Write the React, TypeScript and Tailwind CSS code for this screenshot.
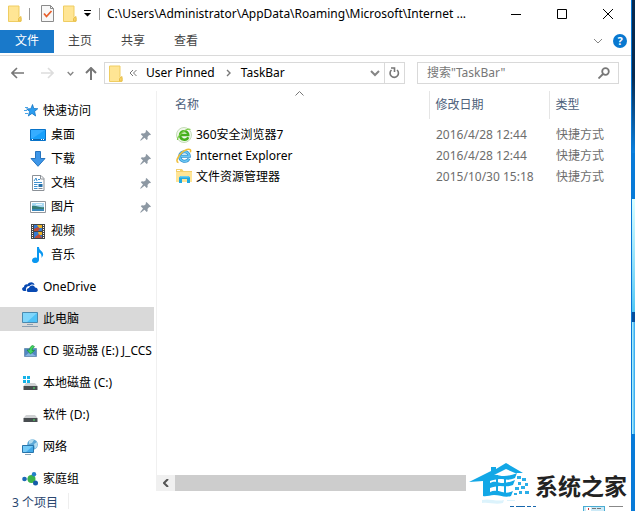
import { useState } from 'react';
import type { ReactNode } from 'react';

type NavItem = { name: string; icon: ReactNode; child?: boolean; pinned?: boolean };
type FileItem = { name: string; date: string; type: string; icon: ReactNode };

const FolderIcon = () => (
  <svg width="14" height="17" viewBox="0 0 14 17" className="shrink-0">
    <path d="M.5 1h10.500v11.500l2 .5v3.500H.5z" fill="#ffe594" stroke="#efcd62" />
    <path d="M10.500 13.500l2.500-2v4.500h-2.500z" fill="#f9d569" stroke="#e8bf4c" />
  </svg>
);

const PropertiesIcon = () => (
  <svg width="13" height="17" viewBox="0 0 13 17">
    <path d="M.5.5h9l3 3v13H.5z" fill="#f8f8f8" stroke="#8b8b8b" />
    <path d="M9.500.5v3h3" fill="none" stroke="#8b8b8b" />
    <path d="M3 8.500l2.500 3L10.500 6" fill="none" stroke="#e8602c" strokeWidth="1.800" />
  </svg>
);

const PinIcon = () => (
  <svg width="11" height="11" viewBox="0 0 11 11" fill="#8d98a3">
    <path d="M6.500 0L11 4.500l-1 .8-.8-.2L7.500 7l.2 2-1 1-2.200-2.200L.7 10.700l-.5-.4L3 6.400.8 4.300l1-1 2.200.2L6 2 5.600.9z" />
  </svg>
);

const StarIcon = () => (
  <svg width="14" height="14" viewBox="0 0 14 14">
    <path d="M8.500.5l1.300 4 4 .2-3.200 2.700 1 4.600-3.600-2.600L4.300 12l1.300-4.400-3-2.700 4.300-.2z" fill="#2b9df0" stroke="#1776c4" strokeWidth=".8" />
    <path d="M1 3.500h3M0 6.500h3M1 9.500h3" stroke="#4aa5e8" strokeWidth="1" />
  </svg>
);

const DesktopIcon = () => (
  <svg width="16" height="12" viewBox="0 0 16 12">
    <path d="M.5.500h15v11H.5z" fill="#18a0fb" stroke="#0873c9" />
    <path d="M1 1h14L3 9H1z" fill="#36adff" />
    <path d="M1 10h14v1H1z" fill="#0c65ad" />
    <path d="M2 10h1v1H2zM11 10h1v1h-1zM13 10h1v1h-1z" fill="#fff" />
  </svg>
);

const DownloadIcon = () => (
  <svg width="16" height="16" viewBox="0 0 16 16">
    <path d="M5.500.5h5v7h4.500L8 15.300 1 7.500h4.500z" fill="#3d96e8" stroke="#2674bf" />
  </svg>
);

const DocumentIcon = () => (
  <svg width="13" height="16" viewBox="0 0 13 16">
    <path d="M.5.500h8.500l3 3v12H.5z" fill="#fff" stroke="#8c9197" />
    <path d="M8.500.5v3.500H12" fill="none" stroke="#8c9197" />
    <path d="M2 6l2-3 1 3M6 4.500h2M2 7.500h8M2 9.500h3.500M2 11.500h3.500M2 13.500h3.500" fill="none" stroke="#3e90cf" />
    <path d="M6.500 9h4v3h-4z" fill="#256fa8" />
    <path d="M6.500 13.500h4" stroke="#7d8996" />
  </svg>
);

const PictureIcon = () => (
  <svg width="16" height="12" viewBox="0 0 16 12">
    <path d="M.5.500h15v11H.5z" fill="#fff" stroke="#92979d" />
    <path d="M2 2h12v8H2z" fill="#a8d8f2" />
    <path d="M2 5c4-1 8 2 12 1v4H2z" fill="#367e77" />
    <path d="M2 8h12v2H2z" fill="#3a88bb" />
    <path d="M6 3h6v1H6z" fill="#e7f6fc" />
  </svg>
);

const VideoIcon = () => (
  <svg width="14" height="15" viewBox="0 0 14 15">
    <path d="M0 0h14v15H0z" fill="#454545" />
    <path d="M3 1h8v6H3zM3 8h8v6H3z" fill="#3479d2" />
    <path d="M6 1h5v3H8zM7 8h4v3H8z" fill="#edb428" />
    <path d="M3 5l4-2 2 2-2 2H3zM4 13l4-3 3 4H4z" fill="#bd4a36" />
    <path d="M1.500 1v13M12.500 1v13" stroke="#fff" strokeWidth="1" strokeDasharray="1 1" />
  </svg>
);

const MusicIcon = () => (
  <svg width="12" height="16" viewBox="0 0 12 16" fill="#0997f0">
    <path d="M5 0h2c0 4 5 4 4 8.500L9.500 11C10 7 8 6 7 5.500V13c-.3 4-7 4-7 .5 0-2.500 3-3.500 5-2.500z" />
  </svg>
);

const OneDriveIcon = () => (
  <svg width="16" height="10" viewBox="0 0 16 10" fill="#094ab2">
    <path d="M4 9H2C-1 8.500 0 5 2 5c0-2 2-3 3.500-2.500C7-.5 12-.5 12.500 3 10.500 2 8.500 2.500 7.500 4 5 3.800 3.500 6 4 9z" />
    <path d="M6 10c-2-.5-1.500-4 1-4 .5-3 5-3.500 6-.5 3 0 4 4 1 4.500z" />
  </svg>
);

const ComputerIcon = () => (
  <svg width="16" height="15" viewBox="0 0 16 15">
    <path d="M.5.500h15v10H.5z" fill="#4fc2f7" stroke="#4a8ab0" />
    <path d="M1 1h14L5 10H1z" fill="#80d6fb" />
    <path d="M5 12h6v1H5zM0 14h16v1H0z" fill="#8b9fb1" />
  </svg>
);

const CdIcon = () => (
  <svg width="13" height="13" viewBox="0 0 13 13">
    <path d="M.5 3.500h12v8H.5z" fill="#5187c2" stroke="#7395b9" />
    <path d="M1 11l5-4 6 4z" fill="#86b4e1" />
    <path d="M8.500.3l2 1.400C8.500 3 8.300 4 8 5.500h2.500L6.500 9 3 5h2.500C5.700 3 6.500 1.500 8.500.3z" fill="#40d660" stroke="#178b38" strokeWidth=".7" />
  </svg>
);

const DriveIcon = ({ system }: { system?: boolean }) => (
  <svg width="15" height="14" viewBox="0 0 15 14">
    {system && <path d="M0 0h3v3H0zM4 0h3v3H4zM0 4h3v3H0zM4 4h3v3H4z" fill="#16b3e8" />}
    <path d="M3 7h9l2.500 3H.5z" fill="#cfd1d3" />
    <path d="M.5 10h14v4H.5z" fill="#484d50" />
    <path d="M10 11.500h2v1h-2z" fill="#4bea64" />
  </svg>
);

const NetworkIcon = () => (
  <svg width="16" height="16" viewBox="0 0 16 16">
    <circle cx="10.500" cy="5.500" r="5.300" fill="#5ba8d7" />
    <path d="M7 2c2-2 4-2 5-1l-2 3-3 1zM12 5l3-2c1 3 0 5-2 7z" fill="#b4dcef" />
    <path d="M.5 6.500h11v7H.5z" fill="#42a9e8" stroke="#2874aa" />
    <path d="M1 7h10l-7 6H1z" fill="#74caf7" />
    <path d="M3 15h6v1H3z" fill="#88a4b8" />
  </svg>
);

const HomeGroupIcon = () => (
  <svg width="16" height="14" viewBox="0 0 16 14">
    <path d="M3 7h6l3-5M9 7l5 4" stroke="#8abbd3" fill="none" />
    <circle cx="9.500" cy="7" r="4" fill="#3cb44a" />
    <circle cx="2.500" cy="7" r="2.300" fill="#1d69b8" />
    <circle cx="12" cy="2.200" r="2.200" fill="#2380c7" />
    <circle cx="13.500" cy="11" r="2.500" fill="#145ca8" />
  </svg>
);

const SafeBrowserIcon = () => (
  <svg width="16" height="16" viewBox="0 0 16 16">
    <circle cx="8" cy="8" r="7.500" fill="#f1f8ec" stroke="#c5dcb8" />
    <path d="M12.300 10.300c-1.800 4-8.300 3-8.300-2.100 0-5.400 8.300-5.400 8.300-.2H5" fill="none" stroke="#45b01c" strokeWidth="2.400" />
    <path d="M1.500 13C1 9.500 10 .5 14.500 2.500" fill="none" stroke="#7ccc48" strokeWidth="1.200" />
  </svg>
);

const IeIcon = () => (
  <svg width="16" height="16" viewBox="0 0 16 16">
    <path d="M13 10.600c-2 4.200-9.300 3.400-9.300-2.300 0-6 9.600-6 9.600-.1H5" fill="none" stroke="#2d8fd0" strokeWidth="3" />
    <path d="M13 10.600c-2 4.200-9.300 3.400-9.300-2.300 0-6 9.600-6 9.600-.1H5" fill="none" stroke="#6cc7f2" strokeWidth="1.500" />
    <path d="M2.500 14.500C-2 14 4 4 11 1.500c3-1 4.300.3 3.300 2.800" fill="none" stroke="#efbd38" strokeWidth="1.500" />
  </svg>
);

const ExplorerIcon = () => (
  <svg width="16" height="15" viewBox="0 0 16 15">
    <path d="M0 0h6l1.500 2H16v11H0z" fill="#f4cf6a" />
    <path d="M0 3h16v10H0z" fill="#ffe596" />
    <path d="M3 14V8.500L4.500 7h8L14 8.500V14h-3v-4H6v4z" fill="#20a9e3" />
    <path d="M4.500 7h8l1 1.500h-10z" fill="#6acdf0" />
    <path d="M1 1h3v1H1z" fill="#fff" />
  </svg>
);

const Chevron = ({ size = 10, thick = 1 }: { size?: number; thick?: number }) => (
  <svg width={size} height={size} viewBox="0 0 10 10" fill="none" stroke="#858585" strokeWidth={thick}>
    <path d="M1 3l4 4 4-4" />
  </svg>
);

const Logo = () => (
  <svg width="70" height="45" viewBox="0 0 70 45">
    <path d="M37 0l17 10h-8l-9-4-16 8v15c4-2 8-1 12 0 4 1 7 1 11-1l-2 5c-6 2-11-1-17-1-4 0-8 2-11 1V18L0 19l22-11V4h5v2z" fill="#12a7e6" />
    <path d="M21 13c5-3 9 0 14 0 4 0 8-1 13-3l-2 5c-7 3-10 1-15 1-4 0-7 1-10 2zM21 20c5-3 9 0 13 0 4 0 7-1 12-3l-2 5c-5 2-9 1-13 1-4 0-7 1-10 2z" fill="#12a7e6" />
    <path d="M28 12v18M36 14v17" stroke="#12a7e6" strokeWidth="2" />
    <path d="M48 13h4v3h-4zM53 15h4v3h-4zM49 19h3v3h-3zM56 20h3v3h-3zM46 24h4v3h-4zM52 23h4v3h-4zM50 28h3v3h-3zM56 28h4v3h-4zM45 30h3v2h-3z" fill="#2baee8" />
    <path d="M13 37c8-2 14 2 22 0l-1 3c-8 2-13-1-21 0zM38 37h8v1h-8z" fill="#dcf3fc" />
    <path d="M41 43h4v1h-4zM47 43h9v1h-9zM58 43h4v1h-4zM64 43h3v1h-3z" fill="#1767ad" />
  </svg>
);

const navItems: NavItem[] = [
  { name: '桌面', icon: <DesktopIcon />, child: true, pinned: true },
  { name: '下载', icon: <DownloadIcon />, child: true, pinned: true },
  { name: '文档', icon: <DocumentIcon />, child: true, pinned: true },
  { name: '图片', icon: <PictureIcon />, child: true, pinned: true },
  { name: '视频', icon: <VideoIcon />, child: true },
  { name: '音乐', icon: <MusicIcon />, child: true },
  { name: 'OneDrive', icon: <OneDriveIcon /> },
  { name: '此电脑', icon: <ComputerIcon /> },
  { name: 'CD 驱动器 (E:) J_CCS', icon: <CdIcon /> },
  { name: '本地磁盘 (C:)', icon: <DriveIcon system /> },
  { name: '软件 (D:)', icon: <DriveIcon /> },
  { name: '网络', icon: <NetworkIcon /> },
  { name: '家庭组', icon: <HomeGroupIcon /> },
];

const files: FileItem[] = [
  { name: '360安全浏览器7', date: '2016/4/28 12:44', type: '快捷方式', icon: <SafeBrowserIcon /> },
  { name: 'Internet Explorer', date: '2016/4/28 12:44', type: '快捷方式', icon: <IeIcon /> },
  { name: '文件资源管理器', date: '2015/10/30 15:18', type: '快捷方式', icon: <ExplorerIcon /> },
];

export default function App() {
  const [selected, setSelected] = useState('此电脑');
  const [query, setQuery] = useState('');

  return (
    <div className="relative flex h-screen overflow-hidden bg-white font-['Noto_Sans','Noto_Sans_CJK_SC',sans-serif] text-[12px] leading-4 text-black">
      <div className="flex min-w-0 flex-1 flex-col">
        <header className="flex h-[27px] shrink-0 items-center">
          <div className="flex items-center pl-2">
            <FolderIcon />
            <span className="ml-[7px] h-3 w-px bg-[#999]" />
            <button aria-label="属性" className="ml-[11px]"><PropertiesIcon /></button>
            <button aria-label="新建文件夹" className="ml-[9px]"><FolderIcon /></button>
            <button aria-label="自定义快速访问工具栏" className="ml-[7px]">
              <svg width="7" height="7" viewBox="0 0 7 7"><path d="M0 0h7v1H0zM0 3h7L3.500 6.500z" /></svg>
            </button>
            <span className="ml-2 h-3 w-px bg-[#999]" />
          </div>
          <h1 className="ml-[7px] min-w-0 flex-1 truncate">C:\Users\Administrator\AppData\Roaming\Microsoft\Internet ...</h1>
          <div className="flex shrink-0 pr-px">
            <button aria-label="最小化" className="flex h-[27px] w-11 items-center justify-center">
              <svg width="10" height="10" viewBox="0 0 10 10"><path d="M0 5h10v1H0z" /></svg>
            </button>
            <button aria-label="最大化" className="flex h-[27px] w-12 items-center justify-center">
              <svg width="10" height="10" viewBox="0 0 10 10" fill="none" stroke="#000"><path d="M.5.500h9v9h-9z" /></svg>
            </button>
            <button aria-label="关闭" className="flex h-[27px] w-11 items-center justify-center">
              <svg width="10" height="10" viewBox="0 0 10 10" stroke="#000"><path d="M0 0l10 10M10 0L0 10" /></svg>
            </button>
          </div>
        </header>

        <nav className="flex h-[29px] shrink-0 items-center border-b border-[#dadada] text-[#444]">
          <button className="h-[23px] w-[54px] bg-[#1979ca] text-white">文件</button>
          <button className="ml-[14px]">主页</button>
          <button className="ml-[29px]">共享</button>
          <button className="ml-[29px]">查看</button>
          <button aria-label="展开功能区" className="ml-auto"><Chevron /></button>
          <button aria-label="帮助" className="mx-1 ml-2.5 flex h-[14px] w-[14px] items-center justify-center rounded-full bg-[#0878d0] text-[11px] font-bold text-white">?</button>
        </nav>

        <div className="flex h-[34px] shrink-0 items-center pr-3">
          <div className="flex w-[104px] shrink-0 items-center pl-[11px]">
            <button aria-label="后退">
              <svg width="13" height="12" viewBox="0 0 13 12" fill="none" stroke="#777" strokeWidth="1.600"><path d="M13 6H1M6 1L1 6l5 5" /></svg>
            </button>
            <button aria-label="前进" className="ml-[17px]">
              <svg width="13" height="12" viewBox="0 0 13 12" fill="none" stroke="#ddd" strokeWidth="1.600"><path d="M0 6h12M7 1l5 5-5 5" /></svg>
            </button>
            <button aria-label="最近浏览的位置" className="ml-[13px]"><Chevron size={7} thick={2} /></button>
            <button aria-label="上移" className="ml-[11px]">
              <svg width="12" height="13" viewBox="0 0 12 13" fill="none" stroke="#777" strokeWidth="2"><path d="M6 13V1M1 6l5-5 5 5" /></svg>
            </button>
          </div>
          <div className="flex h-[22px] min-w-0 flex-1 items-center border border-[#d9d9d9] pl-1">
            <FolderIcon />
            <svg width="8" height="8" viewBox="0 0 8 8" fill="none" stroke="#777" className="ml-1.5 shrink-0"><path d="M4 1L1 4l3 3M7.500 1l-3 3 3 3" /></svg>
            <button className="ml-[9px] whitespace-nowrap">User Pinned</button>
            <svg width="6" height="8" viewBox="0 0 6 8" fill="none" stroke="#777" strokeWidth="1.400" className="ml-[11px] shrink-0"><path d="M1 1l3 3-3 3" /></svg>
            <button className="ml-[9px]">TaskBar</button>
            <button aria-label="以前的位置" className="ml-auto mr-1"><Chevron thick={2} /></button>
            <button aria-label="刷新" className="flex h-full w-5 shrink-0 items-center justify-center border-l border-[#d9d9d9]">
              <svg width="11" height="12" viewBox="0 0 11 12" fill="none" stroke="#777" strokeWidth="1.600"><path d="M2.500 3a4.200 4.200 0 1 0 5.500 0M2 1h3.500v4" /></svg>
            </button>
          </div>
          <div className="ml-3 flex h-[22px] w-[202px] shrink-0 items-center border border-[#d9d9d9] pr-2 pl-[9px]">
            <input
              aria-label="搜索"
              value={query}
              onChange={e => setQuery(e.target.value)}
              placeholder={'搜索"TaskBar"'}
              className="min-w-0 flex-1 outline-none placeholder:text-[#777]"
            />
            <svg width="12" height="12" viewBox="0 0 12 12" fill="none" stroke="#777" strokeWidth="1.800"><circle cx="7.500" cy="4.500" r="3.300" /><path d="M5 7L.5 11.500" /></svg>
          </div>
        </div>

        <div className="flex min-h-0 flex-1 pt-px">
          <aside className="w-[157px] shrink-0 overflow-hidden border-r border-[#f0f0f0] pt-2 pr-0.5">
            <button className="flex h-6 w-full items-center pl-6">
              <StarIcon />
              <span className="ml-[5px]">快速访问</span>
            </button>
            {navItems.map(item => (
              <button
                key={item.name}
                onClick={() => setSelected(item.name)}
                className={`flex h-6 w-full items-center whitespace-nowrap ${
                  item.child ? 'pl-[30px]' : 'mt-2 pl-[22px]'
                } ${selected === item.name ? 'bg-[#d9d9d9]' : ''}`}
              >
                <span className="flex w-4 shrink-0 justify-center">{item.icon}</span>
                <span className="ml-[5px]">{item.name}</span>
                {item.pinned && <span className="mr-[3px] ml-auto"><PinIcon /></span>}
              </button>
            ))}
          </aside>

          <main className="flex min-w-0 flex-1 flex-col">
            <table className="w-full table-fixed text-left">
              <thead className="text-[#4c607a]">
                <tr className="h-7">
                  <th className="relative pl-[18px] font-normal">
                    名称
                    <svg width="9" height="5" viewBox="0 0 9 5" fill="none" stroke="#777" className="absolute top-0 left-1/2 ml-0.5"><path d="M.5 4.500l4-4 4 4" /></svg>
                  </th>
                  <th className="w-[120px] border-l border-[#e5e5e5] pl-1.5 font-normal">修改日期</th>
                  <th className="w-[82px] border-l border-[#e5e5e5] pl-1.5 font-normal">类型</th>
                </tr>
              </thead>
              <tbody className="before:block before:h-[5px]">
                {files.map(file => (
                  <tr key={file.name} className="h-[21px]">
                    <td className="pl-[19px]">
                      <span className="flex items-center gap-1">{file.icon}{file.name}</span>
                    </td>
                    <td className="pl-[7px] whitespace-nowrap text-[#6d6d6d]">{file.date}</td>
                    <td className="pl-[7px] whitespace-nowrap text-[#6d6d6d]">{file.type}</td>
                  </tr>
                ))}
              </tbody>
            </table>
            <div className="mt-auto flex h-4 shrink-0">
              <button aria-label="向左滚动" className="flex w-[18px] items-center justify-center bg-[#f0f0f0]">
                <svg width="6" height="8" viewBox="0 0 6 8" fill="none" stroke="#555" strokeWidth="2"><path d="M5 0L1 4l4 4" /></svg>
              </button>
              <div className="mr-[165px] flex-1 bg-[#cdcdcd]" />
            </div>
          </main>
        </div>

        <footer className="flex h-5 shrink-0 items-center pl-3 text-[#29466f]">
          <span className="pt-1">3 个项目</span>
          <span className="ml-2.5 h-4 w-px bg-[#eee]" />
          <div className="mr-2 ml-auto flex items-start gap-1 self-end">
            <button aria-label="详细信息" className="flex h-[5px] w-[22px] items-end justify-center border border-b-0 border-[#4aacd2] bg-[#cceaf7]">
              <svg width="16" height="4" viewBox="0 0 16 4"><path d="M0 0h5v4H0z" fill="#fff" /><path d="M2 1h1v2H2z" fill="#c33" /><path d="M6 1h4v1H6zM11 1h4v1h-4z" fill="#777" /></svg>
            </button>
            <button aria-label="大图标" className="h-px w-[14px] bg-[#888]" />
          </div>
        </footer>
      </div>

      <div className="flex w-1 shrink-0 flex-col border-l border-[#0879d7] bg-[#087bd8]">
        <div className="h-[30%] bg-linear-to-b from-[#062a50] from-50% to-[#0b82e0]" />
        <div className="h-[9%] bg-[#087bd8]" />
        <div className="h-[22%] bg-linear-to-b from-[#d9ffff] to-[#50c8f5]" />
        <div className="h-[2%] bg-[#064e9b]" />
        <div className="h-[22%] bg-linear-to-r from-[#b8faff] to-[#18a0ed]" />
      </div>

      <div className="absolute right-2 bottom-[3px] flex items-center">
        <Logo />
        <span className="-ml-1 text-[23px] leading-8 font-bold whitespace-nowrap text-[#222]">系统之家</span>
      </div>
    </div>
  );
}
